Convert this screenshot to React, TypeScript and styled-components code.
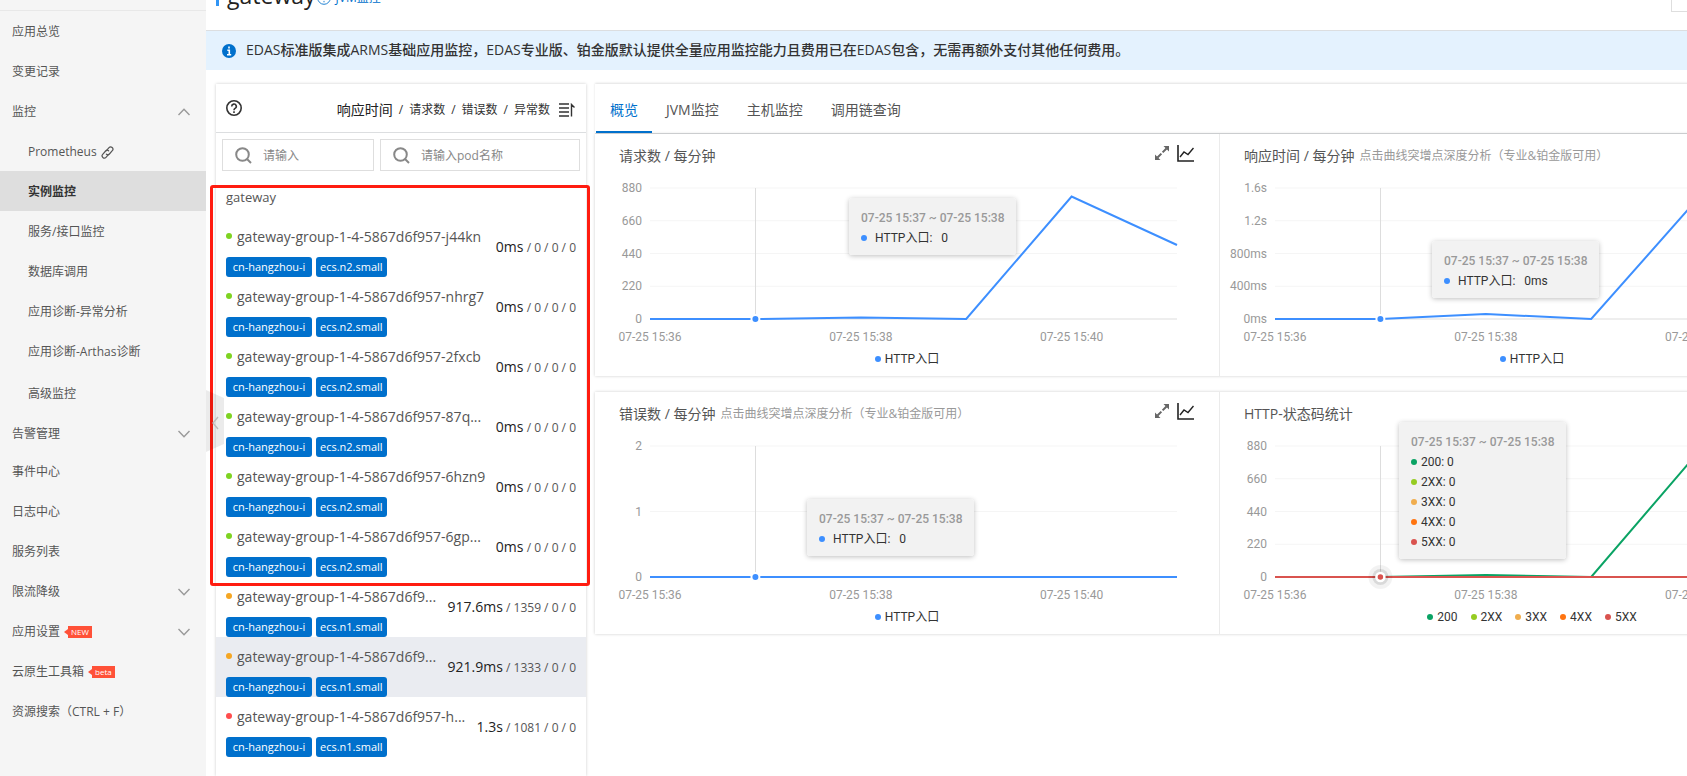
import React from "react";
import styled, { createGlobalStyle } from "styled-components";

const GlobalStyle = createGlobalStyle`
  *, *::before, *::after { box-sizing: border-box; }
  body {
    margin: 0;
    background: #fff;
    color: #555;
    font-family: "Open Sans", "Noto Sans CJK SC", sans-serif;
    font-size: 12px;
    line-height: 20px;
  }
  button, input { font: inherit; color: inherit; }
  ul { list-style: none; margin: 0; padding: 0; }
  h1, h2, p { margin: 0; font-weight: 400; }
`;

const BLUE = "#0070cc";
const LINE_BLUE = "#3d8fff";

/* ---------- shell ---------- */

const Shell = styled.div`
  display: flex;
  min-height: 100vh;
  overflow: hidden;
`;

const Content = styled.main`
  position: relative;
  flex: 1;
  min-width: 0;
  display: flex;
  flex-direction: column;
`;

/* ---------- side navigation ---------- */

const Sidebar = styled.nav`
  flex: none;
  width: 206px;
  padding-top: 10px;
  background: #f5f5f5;
`;

const NavList = styled.ul`
  border-top: 1px solid #e8e8e8;
`;

const NavLink = styled.a<{ $sub?: boolean; $active?: boolean; $height?: number }>`
  display: flex;
  align-items: center;
  height: ${(p) => p.$height ?? 40}px;
  padding: 2px 16px 0 ${(p) => (p.$sub ? 28 : 12)}px;
  color: ${(p) => (p.$active ? "#333" : "#555")};
  background: ${(p) => (p.$active ? "#dedede" : "transparent")};
  font-weight: ${(p) => (p.$active ? 700 : 400)};
  text-decoration: none;
  white-space: nowrap;

  > svg.chevron { margin-left: auto; }
  > svg.link { margin-left: 4px; }
`;

const Flag = styled.span`
  position: relative;
  margin-left: 8px;
  padding: 0 3px;
  height: 12px;
  line-height: 12px;
  font-size: 8px;
  color: #fff;
  background: #ff5138;

  &::before {
    content: "";
    position: absolute;
    left: -4px;
    top: 3px;
    border: solid transparent;
    border-width: 3px 4px 3px 0;
    border-right-color: #ff5138;
  }
`;

type NavItem = {
  label: string;
  sub?: boolean;
  active?: boolean;
  link?: boolean;
  open?: "up" | "down";
  flag?: string;
  height?: number;
};

const NAV: NavItem[] = [
  { label: "应用总览" },
  { label: "变更记录" },
  { label: "监控", open: "up" },
  { label: "Prometheus", sub: true, link: true },
  { label: "实例监控", sub: true, active: true },
  { label: "服务/接口监控", sub: true },
  { label: "数据库调用", sub: true },
  { label: "应用诊断-异常分析", sub: true },
  { label: "应用诊断-Arthas诊断", sub: true },
  { label: "高级监控", sub: true, height: 43 },
  { label: "告警管理", open: "down", height: 37 },
  { label: "事件中心" },
  { label: "日志中心" },
  { label: "服务列表" },
  { label: "限流降级", open: "down" },
  { label: "应用设置", open: "down", flag: "NEW" },
  { label: "云原生工具箱", flag: "beta" },
  { label: "资源搜索（CTRL + F）" },
];

const Chevron = ({ up }: { up?: boolean }) => (
  <svg className="chevron" width="12" height="8" viewBox="0 0 12 8" fill="none" stroke="#999" strokeWidth="1.4">
    <path d={up ? "M.5 7 6 1.3 11.5 7" : "M.5 1 6 6.7 11.5 1"} />
  </svg>
);

const ChainIcon = () => (
  <svg className="link" width="13" height="13" viewBox="0 0 13 13" fill="none" stroke="#555" strokeWidth="1.2" strokeLinecap="round">
    <path d="M5.4 4.6 8 1.7a2.2 2.2 0 0 1 3.3 3L8.4 8a2.2 2.2 0 0 1-3 .2" />
    <path d="M7.6 8.4 5 11.3a2.2 2.2 0 0 1-3.3-3L4.6 5a2.2 2.2 0 0 1 3-.2" />
  </svg>
);

const Collapse = styled.button`
  position: absolute;
  left: 0;
  top: 390px;
  width: 18px;
  height: 62px;
  padding: 0;
  border: 0;
  background: none;

  svg { display: block; }
`;

/* ---------- page heading ---------- */

const Heading = styled.header`
  display: flex;
  align-items: center;
  height: 61px;
  margin-top: -30px;
  padding-left: 10px;
  border-bottom: 1px solid #dcdee0;
  overflow: hidden;
`;

const Accent = styled.span`
  width: 3px;
  height: 22px;
  margin: 0 8px 10px 0;
  background: #3195f5;
`;

const Title = styled.h1`
  padding-bottom: 10px;
  font-size: 23px;
  line-height: 32px;
  color: #222;
`;

const HelpLink = styled.a`
  display: flex;
  align-items: center;
  gap: 5px;
  margin-left: 1px;
  padding-bottom: 4px;
  color: ${BLUE};
  text-decoration: none;
`;

const HeaderButton = styled.button`
  width: 88px;
  height: 32px;
  margin: 0 -72px 9px auto;
  border: 1px solid #dedede;
  background: #fff;
`;

const Banner = styled.div`
  display: flex;
  align-items: center;
  gap: 10px;
  height: 39px;
  padding: 0 0 2px 16px;
  background: #e4f2fe;
  color: #333;
  font-size: 14px;
  font-weight: 500;
  white-space: nowrap;

  svg { margin-top: 2px; }
`;

const Columns = styled.div`
  flex: 1;
  display: flex;
  gap: 9px;
  padding: 14px 0 0 10px;
`;

/* ---------- instance panel ---------- */

const Panel = styled.section`
  position: relative;
  flex: none;
  width: 370px;
  background: #fff;
  box-shadow: 0 0 3px rgba(0, 0, 0, 0.2);
`;

const PanelHead = styled.div`
  display: flex;
  align-items: center;
  height: 49px;
  padding: 0 11px 0 10px;
  border-bottom: 1px solid #dcdee0;
`;

const Metrics = styled.div`
  display: flex;
  align-items: center;
  gap: 6px;
  margin-left: auto;
  padding-top: 3px;
  color: #333;

  b { font-size: 14px; font-weight: 400; color: #222; }
  svg { margin-left: 3px; }
`;

const SearchRow = styled.div`
  display: flex;
  gap: 6px;
  padding: 6px;
`;

const SearchBox = styled.label<{ $grow?: boolean }>`
  display: flex;
  align-items: center;
  gap: 11px;
  width: ${(p) => (p.$grow ? "auto" : "152px")};
  flex: ${(p) => (p.$grow ? "1" : "none")};
  min-width: 0;
  height: 32px;
  padding-left: 12px;
  border: 1px solid #dedede;

  svg { flex: none; }
  input {
    flex: 1;
    width: 0;
    min-width: 0;
    padding: 2px 0 0;
    border: 0;
    outline: 0;
    background: none;
  }
  input::placeholder { color: #888; opacity: 1; }
`;

const GroupName = styled.h2`
  padding-left: 10px;
  font-size: 13px;
  line-height: 40px;
`;

const Row = styled.li<{ $selected?: boolean }>`
  display: flex;
  align-items: center;
  justify-content: space-between;
  height: 60px;
  padding: 0 10px;
  background: ${(p) => (p.$selected ? "#eaecf1" : "transparent")};
  white-space: nowrap;
`;

const Name = styled.div<{ $color: string }>`
  display: flex;
  align-items: center;
  gap: 5px;
  height: 40px;
  font-size: 14px;

  &::before {
    content: "";
    width: 6px;
    height: 6px;
    margin-bottom: 2px;
    border-radius: 3px;
    background: ${(p) => p.$color};
  }
`;

const Tags = styled.div`
  display: flex;
  gap: 4px;
`;

const Tag = styled.span<{ $minWidth?: number }>`
  min-width: ${(p) => p.$minWidth ?? 70}px;
  padding: 0 4px;
  border-radius: 3px;
  background: ${BLUE};
  color: #fff;
  font-size: 11px;
  text-align: center;
`;

const Values = styled.div`
  b { font-size: 14px; font-weight: 400; color: #222; }
`;

const Highlight = styled.div`
  position: absolute;
  left: -6px;
  top: 101px;
  width: 380px;
  height: 401px;
  border: 3px solid #ff1c10;
  border-radius: 3px;
  pointer-events: none;
`;

const GREEN = "#7ed321";
const ORANGE = "#f5a623";
const RED = "#ff4d4d";

const INSTANCES = [
  { id: "j44kn", color: GREEN, type: "ecs.n2.small", time: "0ms", rest: "/ 0 / 0 / 0" },
  { id: "nhrg7", color: GREEN, type: "ecs.n2.small", time: "0ms", rest: "/ 0 / 0 / 0" },
  { id: "2fxcb", color: GREEN, type: "ecs.n2.small", time: "0ms", rest: "/ 0 / 0 / 0" },
  { id: "87q...", color: GREEN, type: "ecs.n2.small", time: "0ms", rest: "/ 0 / 0 / 0" },
  { id: "6hzn9", color: GREEN, type: "ecs.n2.small", time: "0ms", rest: "/ 0 / 0 / 0" },
  { id: "6gp...", color: GREEN, type: "ecs.n2.small", time: "0ms", rest: "/ 0 / 0 / 0" },
  { id: "", color: ORANGE, type: "ecs.n1.small", time: "917.6ms", rest: "/ 1359 / 0 / 0" },
  { id: "", color: ORANGE, type: "ecs.n1.small", time: "921.9ms", rest: "/ 1333 / 0 / 0", selected: true },
  { id: "h...", color: RED, type: "ecs.n1.small", time: "1.3s", rest: "/ 1081 / 0 / 0" },
];

const SearchIcon = () => (
  <svg width="17" height="17" viewBox="0 0 17 17" fill="none" stroke="#888" strokeWidth="2">
    <circle cx="7.5" cy="7.5" r="6.3" />
    <path d="m12 12 4 4" />
  </svg>
);

const QuestionIcon = ({ size, color, width }: { size: number; color: string; width: number }) => (
  <svg width={size} height={size} viewBox="0 0 16 16" fill="none" stroke={color} strokeWidth={width}>
    <circle cx="8" cy="8" r="7.2" />
    <path d="M5.7 6.4a2.3 2.3 0 1 1 3.4 2C8.3 8.9 8 9.2 8 10.2M8 11.3v1.6" />
  </svg>
);

const SortIcon = () => (
  <svg width="16" height="14" viewBox="0 0 16 14" fill="none" stroke="#333" strokeWidth="1.4">
    <path d="M0 1h10M0 5h10M0 9h10M0 13h10M12.5 13.5V1.5l3 3" />
  </svg>
);

/* ---------- chart area ---------- */

const Charts = styled.section`
  flex: 1;
  min-width: 1250px;
`;

const Tabs = styled.div`
  display: flex;
  height: 50px;
  padding-left: 1px;
  background: #fff;
  border-bottom: 1px solid #dcdee0;
  box-shadow: 0 -1px 2px rgba(0, 0, 0, 0.12);
`;

const Tab = styled.button<{ $active?: boolean }>`
  height: 49px;
  padding: 5px 14px 0;
  border: 0;
  border-bottom: 2px solid ${(p) => (p.$active ? BLUE : "transparent")};
  background: none;
  color: ${(p) => (p.$active ? BLUE : "#555")};
  font-size: 14px;
`;

const CardRow = styled.div`
  display: grid;
  grid-template-columns: 1fr 1fr;
  height: 242px;
  margin-bottom: 16px;
  background: #fff;
  box-shadow: 0 0 3px rgba(0, 0, 0, 0.2);
`;

const Card = styled.article`
  position: relative;
  border-right: 1px solid #ebebeb;
`;

const CardHead = styled.div`
  display: flex;
  align-items: center;
  height: 44px;
  padding: 0 25px 0 24px;
  gap: 5px;

  h2 { font-size: 14px; }
  small { font-size: 12px; color: #999; }
`;

const Tools = styled.div`
  display: flex;
  align-items: center;
  gap: 7px;
  margin-left: auto;
  padding-bottom: 6px;
`;

const ToolButton = styled.button`
  display: flex;
  padding: 0;
  border: 0;
  background: none;
`;

const Plot = styled.svg`
  display: block;
  width: 100%;
  font-family: Roboto, "Noto Sans CJK SC", sans-serif;
  font-size: 12px;
`;

const Legend = styled.div`
  display: flex;
  justify-content: center;
  gap: 13px;
  color: #333;
  font-family: Roboto, "Noto Sans CJK SC", sans-serif;
`;

const Key = styled.span<{ $color: string; $wide?: boolean }>`
  display: flex;
  align-items: center;
  gap: ${(p) => (p.$wide ? 8 : 4)}px;
  white-space: pre;

  &::before {
    content: "";
    width: 6px;
    height: 6px;
    border-radius: 3px;
    background: ${(p) => p.$color};
  }
`;

const Tip = styled.div<{ $x: number; $y: number }>`
  position: absolute;
  left: ${(p) => p.$x}px;
  top: ${(p) => p.$y}px;
  width: 167px;
  padding: 10px 12px 7px;
  border-radius: 3px;
  background: rgba(241, 241, 241, 0.93);
  box-shadow: 0 1px 5px rgba(0, 0, 0, 0.25);
  color: #333;
  font-family: Roboto, "Noto Sans CJK SC", sans-serif;
  white-space: nowrap;

  p { color: #999; font-weight: 500; }
`;

type Series = { name: string; color: string; ys: number[] };
type ChartProps = {
  title: string;
  note?: string;
  tools?: boolean;
  ticks: string[];
  series: Series[];
  tip: { x: number; y: number; lines: string[]; wide?: boolean };
  halo?: boolean;
};

const X0 = 55;
const STEP = 105.4;
const TOP = 10;
const BASE = 141;

const Chart = ({ title, note, tools, ticks, series, tip, halo }: ChartProps) => {
  const last = series[series.length - 1];
  return (
    <Card>
      <CardHead>
        <h2>{title}</h2>
        {note && <small>{note}</small>}
        {tools && (
          <Tools>
            <ToolButton aria-label="放大">
              <svg width="16" height="16" viewBox="0 0 16 16" stroke="#666" fill="#666">
                <path d="m3.5 12.5 9-9" strokeWidth="2" strokeDasharray="5.5 1.7" />
                <path d="M9.5 1H15v5.500zM1 9.500V15h5.500z" stroke="none" />
              </svg>
            </ToolButton>
            <ToolButton aria-label="趋势">
              <svg width="17" height="17" viewBox="0 0 17 17" fill="none" stroke="#222">
                <path d="M1 0v16h16" strokeWidth="1.6" />
                <path d="m3 12 4-5 4 2.500 5.500-6.500" strokeWidth="1.4" />
              </svg>
            </ToolButton>
          </Tools>
        )}
      </CardHead>
      <Plot viewBox="0 0 624 171">
        {ticks.map((t, i) => {
          const y = TOP + ((BASE - TOP) * i) / (ticks.length - 1);
          const axis = i === ticks.length - 1;
          return (
            <g key={t}>
              <line x1={X0} x2={X0 + STEP * 5} y1={y} y2={y} stroke={axis ? "#eee" : "#f5f5f5"} strokeWidth={axis ? 2 : 1} />
              <text x={X0 - 8} y={y + 4} textAnchor="end" fill="#999">{t}</text>
            </g>
          );
        })}
        {["07-25 15:36", "07-25 15:38", "07-25 15:40"].map((t, i) => (
          <text key={t} x={X0 + STEP * 2 * i} y={163} textAnchor="middle" fill="#999">{t}</text>
        ))}
        <path d={`M${X0 + 105.5} ${TOP}V${BASE}`} stroke="#ddd" />
        {series.map((s) => (
          <polyline
            key={s.name}
            points={s.ys.map((y, i) => `${X0 + STEP * i},${BASE - y}`).join(" ")}
            fill="none"
            stroke={s.color}
            strokeWidth="2"
          />
        ))}
        {halo && <circle cx={X0 + STEP} cy={BASE} r="12" fill="rgba(0,0,0,.05)" />}
        {halo && <circle cx={X0 + STEP} cy={BASE} r="8" fill="rgba(0,0,0,.1)" />}
        <circle cx={X0 + STEP} cy={BASE} r="4" fill={last.color} stroke="#fff" strokeWidth={halo ? 2.5 : 2} />
      </Plot>
      <Legend>
        {series.map((s) => (
          <Key key={s.name} $color={s.color}>{s.name}</Key>
        ))}
      </Legend>
      <Tip $x={tip.x} $y={tip.y}>
        <p>07-25 15:37 ~ 07-25 15:38</p>
        {tip.lines.map((l, i) => (
          <Key key={l} $color={series[i].color} $wide={tip.wide}>{l}</Key>
        ))}
      </Tip>
    </Card>
  );
};

const NOTE = "点击曲线突增点深度分析（专业&铂金版可用）";

export default function App() {
  return (
    <Shell>
      <GlobalStyle />
      <Sidebar>
        <NavList>
          {NAV.map((n) => (
            <li key={n.label}>
              <NavLink href="#" $sub={n.sub} $active={n.active} $height={n.height}>
                {n.label}
                {n.link && <ChainIcon />}
                {n.flag && <Flag>{n.flag}</Flag>}
                {n.open && <Chevron up={n.open === "up"} />}
              </NavLink>
            </li>
          ))}
        </NavList>
      </Sidebar>
      <Content>
        <Heading>
          <Accent />
          <Title>gateway</Title>
          <HelpLink href="#">
            <QuestionIcon size={14} color={BLUE} width={1} />
            JVM监控
          </HelpLink>
          <HeaderButton aria-label="更多" />
        </Heading>
        <Banner>
          <svg width="14" height="14" viewBox="0 0 14 14">
            <circle cx="7" cy="7" r="7" fill={BLUE} />
            <path d="M7 2.5v2M5.3 6.2h2v4.3M5 10.7h4.2" stroke="#fff" strokeWidth="1.6" fill="none" />
          </svg>
          EDAS标准版集成ARMS基础应用监控，EDAS专业版、铂金版默认提供全量应用监控能力且费用已在EDAS包含，无需再额外支付其他任何费用。
        </Banner>
        <Columns>
          <Panel>
            <PanelHead>
              <QuestionIcon size={16} color="#333" width={1.6} />
              <Metrics>
                <b>响应时间</b>
                <span>/</span>
                <span>请求数</span>
                <span>/</span>
                <span>错误数</span>
                <span>/</span>
                <span>异常数</span>
                <SortIcon />
              </Metrics>
            </PanelHead>
            <SearchRow>
              <SearchBox>
                <SearchIcon />
                <input placeholder="请输入" aria-label="应用" />
              </SearchBox>
              <SearchBox $grow>
                <SearchIcon />
                <input placeholder="请输入pod名称" aria-label="pod名称" />
              </SearchBox>
            </SearchRow>
            <GroupName>gateway</GroupName>
            <ul>
              {INSTANCES.map((r, i) => (
                <Row key={i} $selected={r.selected}>
                  <div>
                    <Name $color={r.color}>
                      {r.id ? `gateway-group-1-4-5867d6f957-${r.id}` : "gateway-group-1-4-5867d6f9..."}
                    </Name>
                    <Tags>
                      <Tag $minWidth={86}>cn-hangzhou-i</Tag>
                      <Tag>{r.type}</Tag>
                    </Tags>
                  </div>
                  <Values>
                    <b>{r.time}</b> {r.rest}
                  </Values>
                </Row>
              ))}
            </ul>
            <Highlight />
          </Panel>
          <Charts>
            <Tabs role="tablist">
              <Tab role="tab" aria-selected $active>概览</Tab>
              <Tab role="tab">JVM监控</Tab>
              <Tab role="tab">主机监控</Tab>
              <Tab role="tab">调用链查询</Tab>
            </Tabs>
            <CardRow>
              <Chart
                title="请求数 / 每分钟"
                tools
                ticks={["880", "660", "440", "220", "0"]}
                series={[{ name: "HTTP入口", color: LINE_BLUE, ys: [0, 0, 1.5, 0, 122.5, 74] }]}
                tip={{ x: 254, y: 64, lines: ["HTTP入口:   0"], wide: true }}
              />
              <Chart
                title="响应时间 / 每分钟"
                note={NOTE}
                ticks={["1.6s", "1.2s", "800ms", "400ms", "0ms"]}
                series={[{ name: "HTTP入口", color: LINE_BLUE, ys: [0, 0, 5, 0, 119, 90] }]}
                tip={{ x: 212, y: 107, lines: ["HTTP入口:   0ms"], wide: true }}
              />
            </CardRow>
            <CardRow>
              <Chart
                title="错误数 / 每分钟"
                note={NOTE}
                tools
                ticks={["2", "1", "0"]}
                series={[{ name: "HTTP入口", color: LINE_BLUE, ys: [0, 0, 0, 0, 0, 0] }]}
                tip={{ x: 212, y: 107, lines: ["HTTP入口:   0"], wide: true }}
              />
              <Chart
                title="HTTP-状态码统计"
                halo
                ticks={["880", "660", "440", "220", "0"]}
                series={[
                  { name: "200", color: "#0aa364", ys: [0, 0, 2, 0, 123, 74] },
                  { name: "2XX", color: "#96cc22", ys: [0, 0, 0, 0, 0, 0] },
                  { name: "3XX", color: "#f0ad4e", ys: [0, 0, 0, 0, 0, 0] },
                  { name: "4XX", color: "#ff7410", ys: [0, 0, 0, 0, 0, 0] },
                  { name: "5XX", color: "#d9534f", ys: [0, 0, 0, 0, 0, 0] },
                ]}
                tip={{ x: 179, y: 30, lines: ["200: 0", "2XX: 0", "3XX: 0", "4XX: 0", "5XX: 0"] }}
              />
            </CardRow>
          </Charts>
        </Columns>
        <Collapse aria-label="收起">
          <svg width="18" height="62" viewBox="0 0 18 62">
            <path d="M0 0 18 8v46L0 62z" fill="#000" fillOpacity=".08" />
            <path d="m12 27-5 6 5 6" fill="none" stroke="#bbb" strokeWidth="1.4" />
          </svg>
        </Collapse>
      </Content>
    </Shell>
  );
}
